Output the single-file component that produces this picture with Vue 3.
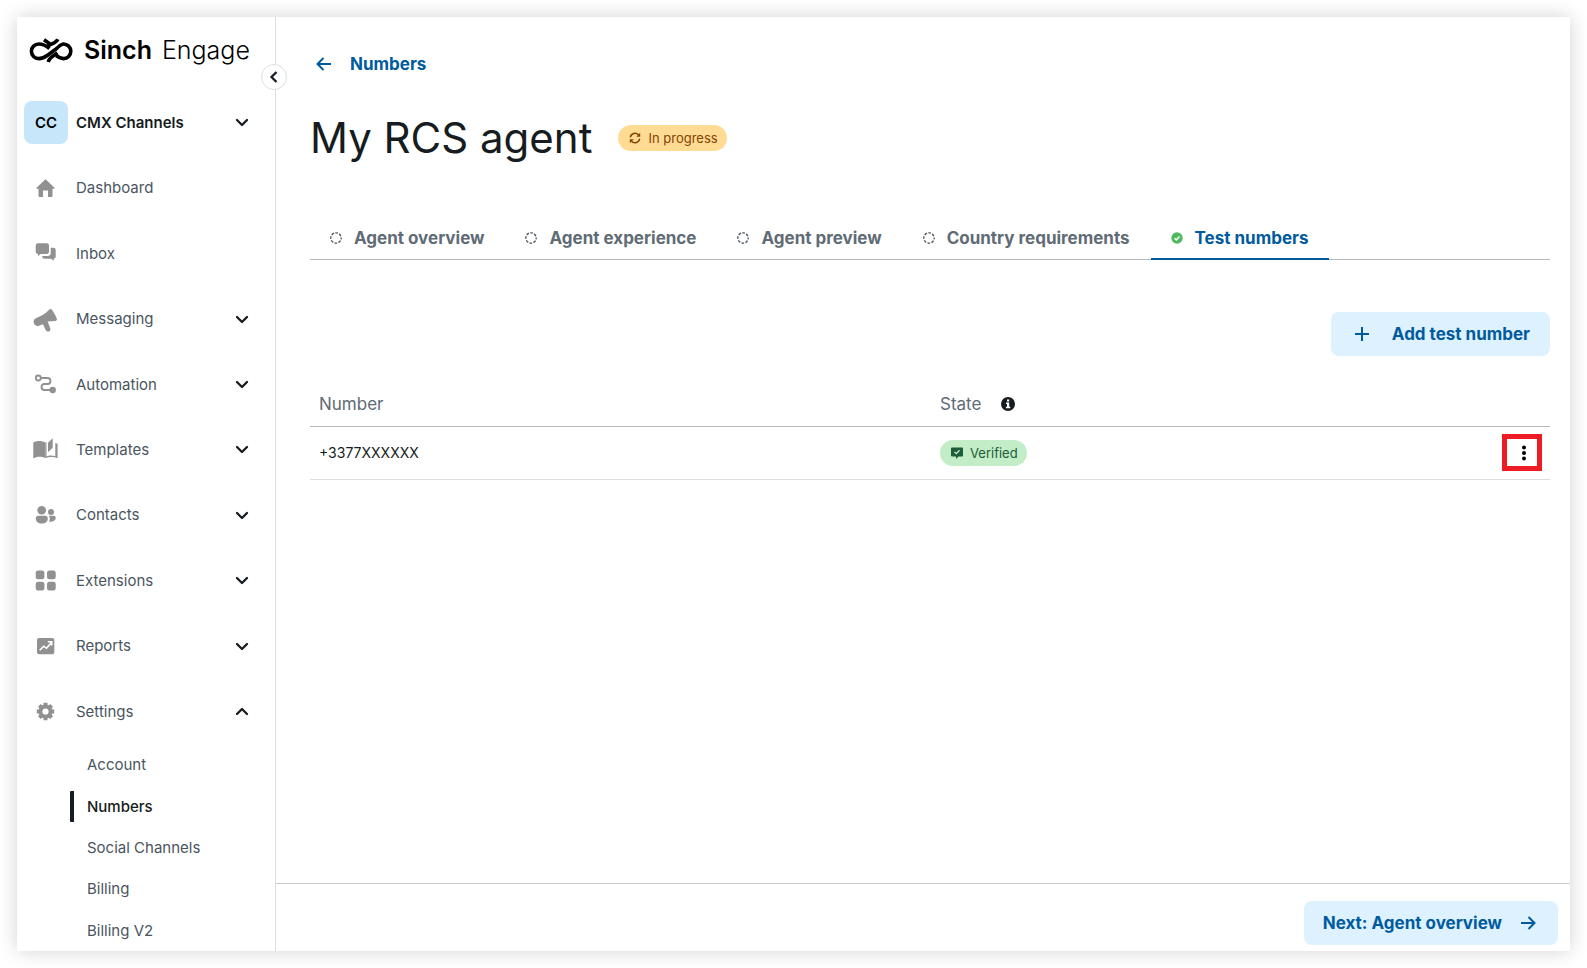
<script setup>
import { ref } from 'vue'

const navItems = [
  { label: 'Dashboard', icon: 'home', expandable: false },
  { label: 'Inbox', icon: 'inbox', expandable: false },
  { label: 'Messaging', icon: 'megaphone', expandable: true },
  { label: 'Automation', icon: 'route', expandable: true },
  { label: 'Templates', icon: 'book', expandable: true },
  { label: 'Contacts', icon: 'people', expandable: true },
  { label: 'Extensions', icon: 'grid', expandable: true },
  { label: 'Reports', icon: 'chart', expandable: true },
  { label: 'Settings', icon: 'gear', expandable: true, open: true },
]

const settingsItems = ['Account', 'Numbers', 'Social Channels', 'Billing', 'Billing V2']
const activeSetting = ref('Numbers')

const tabs = ['Agent overview', 'Agent experience', 'Agent preview', 'Country requirements', 'Test numbers']
const activeTab = ref('Test numbers')

const rows = [{ number: '+3377XXXXXX', state: 'Verified' }]
</script>

<template>
  <div class="window">
    <aside class="sidebar">
      <div class="side-head">
        <a class="brand" href="#" aria-label="Sinch Engage">
          <svg class="brand-mark" width="44" height="26" viewBox="0 0 44 26" fill="none" stroke="#000" stroke-width="3.6">
            <path d="M20.500 11.500C17.500 9 14 7 9.700 7a7.300 7.300 0 0 0 0 14.600c4.300 0 6.300-1.400 9.300-3.600l8-6C30 9.500 32 7 34.500 7a7.300 7.300 0 0 1 0 14.600c-3 0-4.500-1-7.500-3" />
            <path d="M19.200 25c1-4.500 5.300-6 9.300-9" />
            <path d="M15 2.800l6 4.200M28.800 2.200C27 6.500 20.500 7 17 10.500" />
          </svg>
          <span class="brand-name"><b>Sinch</b><span>Engage</span></span>
        </a>
        <button class="account" type="button">
          <span class="avatar">CC</span>
          <span class="account-name">CMX Channels</span>
          <svg class="chevron" width="14" height="10" viewBox="0 0 14 10"><path d="M2 3l5 5 5-5" /></svg>
        </button>
      </div>

      <nav class="nav" aria-label="Main">
        <ul class="nav-list">
          <li v-for="item in navItems" :key="item.label">
            <a class="nav-link" href="#">
              <svg class="nav-icon" width="28" height="28" viewBox="0 0 28 28">
                <path v-if="item.icon === 'home'" d="M13.500 5.200l9 8.600c.4.500.1 1-.5 1h-1.500v7.200a1 1 0 0 1-1 1h-3.500v-6.500h-5V23H7.500a1 1 0 0 1-1-1v-7.200H5c-.6 0-.9-.5-.5-1z" />
                <g v-else-if="item.icon === 'inbox'">
                  <path d="M6 4.300h8.700A2.300 2.300 0 0 1 17 6.600v6.100a2.300 2.300 0 0 1-2.300 2.300H8.500L6 17.300V15a2.300 2.300 0 0 1-2.300-2.300V6.600A2.300 2.300 0 0 1 6 4.300z" />
                  <path d="M18.700 8.700h2.700a2.300 2.300 0 0 1 2.300 2.300v6.400a2.300 2.300 0 0 1-2 2.300v2.100l-2.600-2.100h-6.800a2 2 0 0 1-2-2v-.8h5.400a3 3 0 0 0 3-3z" />
                </g>
                <path v-else-if="item.icon === 'megaphone'" d="M17.300 4.600a1.600 1.600 0 0 1 2.700.2c2 3 3.500 5.700 4.800 9a1.600 1.600 0 0 1-1.500 2.200l-7.600.5 2.500 6.700c.7 1.800-.3 3-1.600 3.300-1.400.3-2.400-.4-3-1.700l-2.700-5.600-3.900 1.500c-2 .8-4-.2-4.900-1.900-1.100-2.200-.4-4.300 1.800-5.500l6.800-3.400c2.800-1.500 4.600-3.200 6.600-5.300z" />
                <g v-else-if="item.icon === 'route'">
                  <g class="line">
                    <circle cx="6.300" cy="8" r="2.500" />
                    <path d="M9 8h6.500a3 3 0 0 1 3 3c0 2-1.300 3-3 3h-3a3 3 0 0 0 0 6H19" />
                  </g>
                  <circle cx="20.700" cy="20" r="3.200" />
                </g>
                <g v-else-if="item.icon === 'book'">
                  <path d="M1.300 7.500c3.500-2 8.500-2 12 0V23c-3.600-1.800-8.400-1.800-12 .3z" />
                  <path d="M20.700 3.300v9.500L16 17.300V7.700z" />
                  <path d="M13.300 22c3-1.800 6.700-2 10-.7V8l2.300.8v14.500c-4-1.600-8.500-1.500-12.300-.2z" />
                  <path d="M13.300 7.500h1.200v15h-1.200z" />
                </g>
                <g v-else-if="item.icon === 'people'">
                  <circle cx="9.700" cy="9.300" r="4.300" />
                  <circle cx="19" cy="11" r="3" />
                  <path d="M6.500 14.800H13a2.800 2.800 0 0 1 2.800 2.800c0 3.400-2.600 5-6 5s-6-1.600-6-5a2.800 2.800 0 0 1 2.700-2.800z" />
                  <path d="M17 14.800h4.700a2 2 0 0 1 2 2c0 2.600-2.400 4.200-6.700 4 1-2 1-4 0-6z" />
                </g>
                <g v-else-if="item.icon === 'grid'">
                  <rect x="3.700" y="4.500" width="8.700" height="8.700" rx="2.500" />
                  <rect x="15" y="4.500" width="8.700" height="8.700" rx="2.500" />
                  <rect x="3.700" y="15.800" width="8.700" height="8.700" rx="2.500" />
                  <rect x="15" y="15.800" width="8.700" height="8.700" rx="2.500" />
                </g>
                <g v-else-if="item.icon === 'chart'">
                  <rect x="5" y="6" width="17.300" height="16.200" rx="2" />
                  <path class="cut" d="M7.700 18.200l4-4 2.800 2 5-5.800M15.800 9.800h3.900v3.700" />
                </g>
                <g v-else>
                  <circle cx="13.500" cy="14.500" r="5.100" fill="none" stroke="currentColor" stroke-width="4" />
                  <path class="teeth" d="M13.500 5.800v2.500M13.500 20.700v2.500M4.800 14.500h2.500M19.700 14.500h2.500M7.400 8.400l1.700 1.700M17.900 18.900l1.700 1.700M7.400 20.600l1.700-1.700M17.900 10.100l1.700-1.700" />
                </g>
              </svg>
              <span class="nav-text">{{ item.label }}</span>
              <svg v-if="item.expandable" class="chevron" width="14" height="10" viewBox="0 0 14 10">
                <path :d="item.open ? 'M2 8l5-5 5 5' : 'M2 3l5 5 5-5'" />
              </svg>
            </a>
          </li>
        </ul>
        <ul class="sub-list">
          <li v-for="name in settingsItems" :key="name">
            <a class="sub-link" :class="{ active: name === activeSetting }" href="#" @click.prevent="activeSetting = name">{{ name }}</a>
          </li>
        </ul>
      </nav>

      <button class="collapse" type="button" aria-label="Collapse menu">
        <svg width="10" height="14" viewBox="0 0 10 14"><path d="M7.500 2l-5 5 5 5" /></svg>
      </button>
    </aside>

    <main class="main">
      <div class="content">
        <a class="back" href="#">
          <svg class="stroke" width="18" height="18" viewBox="0 0 18 18"><path d="M16 9H2.500M8.500 3l-6 6 6 6" /></svg>
          Numbers
        </a>

        <header class="title-row">
          <h1>My RCS agent</h1>
          <span class="badge pending">
            <svg width="12" height="12" viewBox="0 0 12 12">
              <path d="M1.300 5.300A4.800 4.800 0 0 1 9.500 2.800M10.700 6.700a4.800 4.800 0 0 1-8.200 2.500" fill="none" stroke="currentColor" stroke-width="1.500" />
              <path d="M11.200.8v4H7.200zM.8 11.200v-4h4z" />
            </svg>
            In progress
          </span>
        </header>

        <div class="tabs" role="tablist">
          <button
            v-for="tab in tabs"
            :key="tab"
            class="tab"
            :class="{ active: tab === activeTab }"
            type="button"
            role="tab"
            :aria-selected="tab === activeTab"
            @click="activeTab = tab"
          >
            <svg v-if="tab === 'Test numbers'" width="12" height="12" viewBox="0 0 12 12">
              <circle cx="6" cy="6" r="5.700" fill="#4fb960" />
              <path d="M3.500 6.200l1.800 1.800 3.200-3.500" fill="none" stroke="#fff" stroke-width="1.500" />
            </svg>
            <svg v-else width="12" height="12" viewBox="0 0 12 12">
              <circle cx="6" cy="6" r="5.200" fill="none" stroke="#4a5560" stroke-width="1.300" stroke-dasharray="2.700 1.384" stroke-dashoffset="1.350" />
            </svg>
            {{ tab }}
          </button>
        </div>

        <div class="actions">
          <button class="soft-button add" type="button">
            <svg class="stroke" width="16" height="16" viewBox="0 0 16 16"><path d="M8 1v14M1 8h14" /></svg>
            Add test number
          </button>
        </div>

        <table class="numbers">
          <thead>
            <tr>
              <th scope="col">Number</th>
              <th scope="col">
                <span class="th-state">
                  State
                  <svg width="14" height="14" viewBox="0 0 14 14" role="img" aria-label="State information">
                    <circle cx="7" cy="7" r="7" fill="#161c21" />
                    <path d="M6 2.500h2.200v2H6zM5 5.600h3.200v4.200H9.300v1.500H4.900V9.800H6V7.100H5z" fill="#fff" />
                  </svg>
                </span>
              </th>
              <th scope="col" aria-label="Actions"></th>
            </tr>
          </thead>
          <tbody>
            <tr v-for="row in rows" :key="row.number">
              <td>{{ row.number }}</td>
              <td>
                <span class="badge verified">
                  <svg width="12" height="12" viewBox="0 0 12 12">
                    <path d="M1 .5h10a1 1 0 0 1 1 1V8.500a1 1 0 0 1-1 1H7.500L5 12V9.500H1a1 1 0 0 1-1-1V1.500a1 1 0 0 1 1-1z" />
                    <path d="M3.500 5l1.800 1.700 3.200-3.400" fill="none" stroke="#c3edc7" stroke-width="1.300" />
                  </svg>
                  {{ row.state }}
                </span>
              </td>
              <td class="cell-menu">
                <button class="more" type="button" aria-label="Row actions">
                  <svg width="4" height="16" viewBox="0 0 4 16"><circle cx="2" cy="2.500" r="2" /><circle cx="2" cy="8" r="2" /><circle cx="2" cy="13.500" r="2" /></svg>
                </button>
              </td>
            </tr>
          </tbody>
        </table>
      </div>

      <footer class="footer">
        <button class="soft-button next" type="button">
          Next: Agent overview
          <svg class="stroke" width="18" height="18" viewBox="0 0 18 18"><path d="M2 9h13.500M9.500 3l6 6-6 6" /></svg>
        </button>
      </footer>
    </main>
  </div>
</template>

<style>
body {
  background: #fff;
}
#app {
  display: flex;
  min-height: 100vh;
}
</style>

<style scoped>
.window,
.window * {
  box-sizing: border-box;
}
.window {
  flex: 1;
  display: flex;
  margin: 17px;
  background: #fff;
  box-shadow: 0 0 18px rgba(0, 0, 0, 0.18);
  font-family: Inter, 'Open Sans', sans-serif;
  color: #161c21;
}
button {
  font: inherit;
  color: inherit;
  border: 0;
  background: none;
  padding: 0;
  cursor: pointer;
}
a {
  color: inherit;
  text-decoration: none;
}
ul {
  list-style: none;
  margin: 0;
  padding: 0;
}

.sidebar {
  position: relative;
  flex: 0 0 259px;
  border-right: 1px solid #dcdfe2;
  display: flex;
  flex-direction: column;
}
.side-head {
  height: 138px;
}
.brand {
  display: flex;
  align-items: center;
  gap: 11px;
  height: 66px;
  padding-left: 12px;
  color: #000;
}
.brand-name {
  display: flex;
  gap: 10px;
  font-size: 25px;
  font-weight: 300;
  white-space: nowrap;
}
.brand-name b {
  font-weight: 600;
}
.account {
  display: flex;
  align-items: center;
  width: 100%;
  height: 44px;
  margin-top: 17px;
  padding: 0 26px 0 7px;
  text-align: left;
}
.avatar {
  display: grid;
  place-items: center;
  width: 44px;
  height: 43px;
  border-radius: 8px;
  background: #c8e6fa;
  font-size: 15px;
  font-weight: 600;
  color: #000;
}
.account-name {
  flex: 1;
  margin-left: 8px;
  font-size: 15px;
  font-weight: 600;
}
.chevron {
  fill: none;
  stroke: #161c21;
  stroke-width: 2.3;
  stroke-linecap: round;
  stroke-linejoin: round;
}
.nav {
  flex: 1;
  display: flex;
  flex-direction: column;
}
.nav-list {
  display: grid;
  grid-auto-rows: 1fr;
  min-height: 589px;
}
.nav-link {
  display: flex;
  align-items: center;
  height: 100%;
  padding: 0 26px 0 15px;
  font-size: 15px;
  color: #4a5560;
}
.nav-icon {
  margin-right: 16px;
  color: #919191;
  fill: currentColor;
}
.nav-text {
  flex: 1;
}
.line {
  fill: none;
  stroke: currentColor;
  stroke-width: 1.8;
}
.cut {
  fill: none;
  stroke: #fff;
  stroke-width: 1.6;
}
.teeth {
  fill: none;
  stroke: currentColor;
  stroke-width: 4;
}
.sub-list {
  flex: 1;
  display: grid;
  grid-auto-rows: 1fr;
  min-height: 207px;
}
.sub-list li {
  display: flex;
  align-items: center;
  padding-left: 53px;
}
.sub-link {
  border-left: 4px solid transparent;
  border-radius: 1px;
  padding-left: 13px;
  font-size: 15px;
  line-height: 31px;
  color: #4a5560;
}
.sub-link.active {
  border-color: #161c21;
  font-weight: 500;
  color: #161c21;
}
.collapse {
  position: absolute;
  top: 47px;
  right: -12px;
  display: grid;
  place-items: center;
  width: 26px;
  height: 26px;
  border: 1px solid #dcdfe2;
  border-radius: 50%;
  background: #fff;
}
.collapse svg {
  fill: none;
  stroke: #161c21;
  stroke-width: 2.3;
}

.main {
  flex: 1;
  min-width: 0;
  display: flex;
  flex-direction: column;
}
.content {
  flex: 1;
  padding: 35px 20px 0 34px;
}
.stroke {
  fill: none;
  stroke: currentColor;
  stroke-width: 2;
}
.back {
  display: inline-flex;
  align-items: center;
  gap: 17px;
  height: 24px;
  margin-left: 5px;
  font-size: 17px;
  font-weight: 700;
  color: #005a9e;
}
.title-row {
  display: flex;
  align-items: center;
  gap: 26px;
  margin-top: 32px;
}
h1 {
  margin: 0;
  font-size: 42px;
  line-height: 58px;
  font-weight: 400;
}
.badge {
  display: inline-flex;
  align-items: center;
  gap: 7px;
  height: 26px;
  padding: 0 9px 0 11px;
  border-radius: 13px;
  font-size: 13px;
}
.badge svg {
  fill: currentColor;
}
.pending {
  background: #ffdb94;
  color: #854200;
}
.verified {
  background: #c3edc7;
  color: #1d5c38;
}
.tabs {
  display: flex;
  margin-top: 50px;
  border-bottom: 1px solid #b3bbc1;
}
.tab {
  display: flex;
  align-items: center;
  gap: 12px;
  height: 43px;
  margin-bottom: -1px;
  padding: 0 21px 0 20px;
  border-bottom: 2px solid transparent;
  font-size: 17px;
  font-weight: 700;
  color: #5f6b75;
  white-space: nowrap;
}
.tab.active {
  border-color: #005a9e;
  color: #005a9e;
}
.actions {
  display: flex;
  justify-content: flex-end;
  margin-top: 52px;
}
.soft-button {
  display: flex;
  align-items: center;
  height: 44px;
  border-radius: 8px;
  background: #def1ff;
  font-size: 17px;
  font-weight: 700;
  color: #005a9e;
  white-space: nowrap;
}
.add {
  gap: 22px;
  padding: 0 20px 0 23px;
}
.next {
  gap: 17px;
  padding: 0 21px 0 19px;
}
.numbers {
  width: 100%;
  margin-top: 26px;
  border-collapse: collapse;
  table-layout: fixed;
}
.numbers th {
  height: 44px;
  padding: 0 9px;
  border-bottom: 1px solid #b3bbc1;
  font-size: 17px;
  font-weight: 400;
  color: #5f6b75;
  text-align: left;
}
.numbers th:first-child {
  width: 50%;
}
.numbers th:nth-child(2) {
  width: 42%;
}
.th-state {
  display: flex;
  align-items: center;
  gap: 20px;
}
.numbers td {
  height: 53px;
  padding: 0 9px;
  border-bottom: 1px solid #dcdfe2;
  font-size: 14px;
}
.numbers th:nth-child(2),
.numbers td:nth-child(2) {
  padding-left: 10px;
}
.numbers td.cell-menu {
  padding-right: 8px;
}
.more {
  display: grid;
  place-items: center;
  width: 40px;
  height: 37px;
  margin-left: auto;
  padding-left: 3px;
  border: 5px solid #ed1c24;
}
.footer {
  display: flex;
  justify-content: flex-end;
  padding: 17px 12px 6px;
  border-top: 1px solid #c9cdd1;
}
</style>
